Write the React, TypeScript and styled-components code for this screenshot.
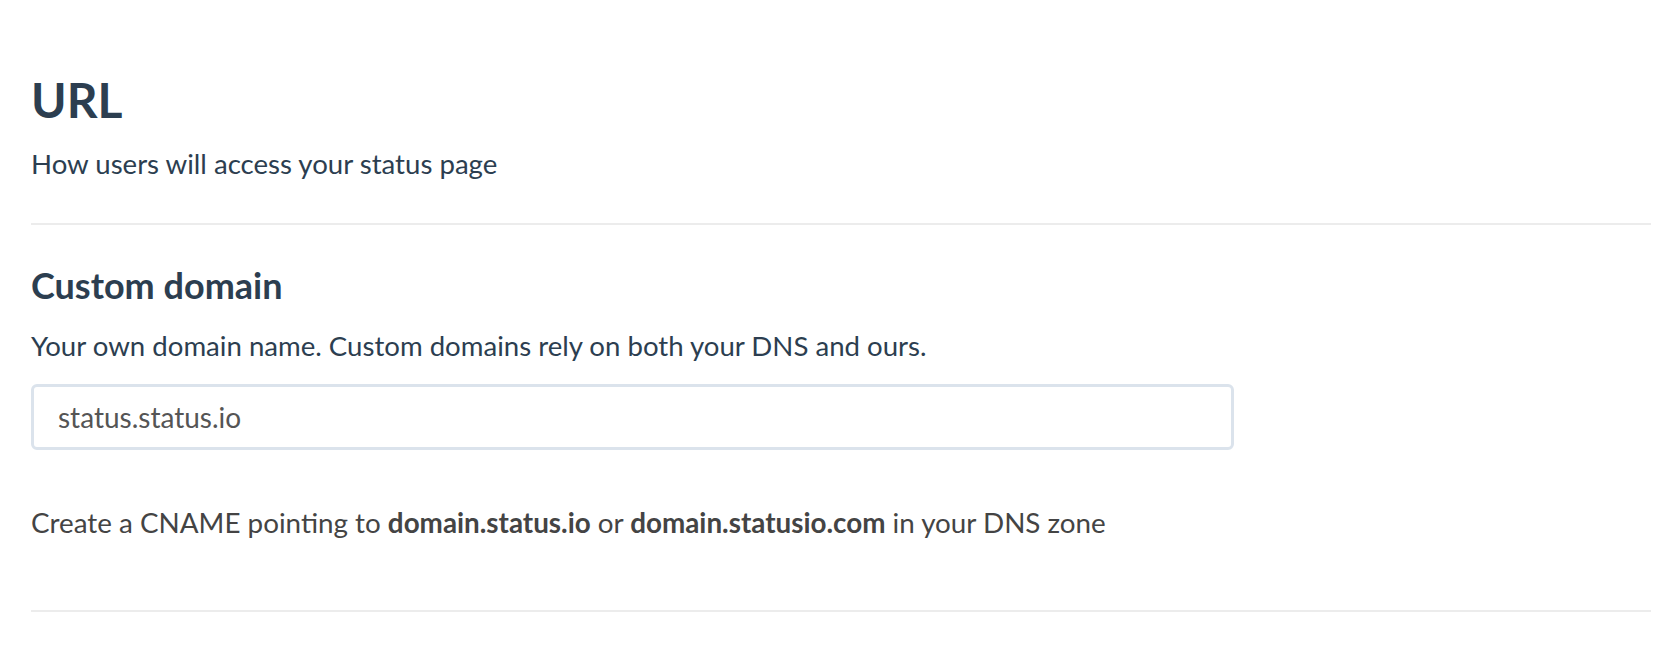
import React from 'react';
import styled, { createGlobalStyle } from 'styled-components';

const COLORS = {
  heading: '#2c3e50',
  text: '#2c3e50',
  muted: '#444444',
  inputText: '#555555',
  divider: '#ececec',
  inputBorder: '#dbe3ec',
};

const GlobalStyle = createGlobalStyle`
  html, body {
    margin: 0;
    padding: 0;
    background: #ffffff;
    font-family: 'Lato', 'Open Sans', sans-serif;
    -webkit-font-smoothing: antialiased;
  }
`;

/** 页面容器 */
const Page = styled.div`
  padding: 71px 20px 0 31px;
`;

const Section = styled.section<{ $padTop?: number; $padBottom: number }>`
  padding-top: ${(p) => p.$padTop ?? 0}px;
  padding-bottom: ${(p) => p.$padBottom}px;
  border-bottom: 2px solid ${COLORS.divider};
`;

const Title = styled.h1`
  margin: 0;
  font-size: 48px;
  font-weight: 700;
  line-height: 58px;
  color: ${COLORS.heading};
`;

const SubTitle = styled.h2`
  margin: 0;
  font-size: 36px;
  font-weight: 700;
  line-height: 44px;
  color: ${COLORS.heading};
`;

const Lead = styled.p<{ $gap: number }>`
  margin: ${(p) => p.$gap}px 0 0;
  font-size: 27.6px;
  line-height: 34px;
  color: ${COLORS.text};
`;

const Field = styled.div`
  padding-top: 21px;
`;

const Input = styled.input`
  display: block;
  box-sizing: border-box;
  width: 1203px;
  height: 66px;
  padding: 0 24px;
  border: 3px solid ${COLORS.inputBorder};
  border-radius: 6px;
  font-family: inherit;
  font-size: 28px;
  color: ${COLORS.inputText};
  outline: none;
  background: #fff;
`;

const Hint = styled.p`
  margin: 56px 0 0;
  font-size: 27.8px;
  line-height: 34px;
  color: ${COLORS.muted};

  strong {
    font-weight: 700;
  }
`;

export default function App() {
  return (
    <>
      <GlobalStyle />
      <Page>
        <Section $padBottom={42}>
          <Title>URL</Title>
          <Lead $gap={18}>How users will access your status page</Lead>
        </Section>
        <Section $padTop={38} $padBottom={70}>
          <SubTitle>Custom domain</SubTitle>
          <Lead $gap={22}>Your own domain name. Custom domains rely on both your DNS and ours.</Lead>
          <Field>
            <Input defaultValue="status.status.io" readOnly />
          </Field>
          <Hint>
            Create a CNAME pointing to <strong>domain.status.io</strong> or{' '}
            <strong>domain.statusio.com</strong> in your DNS zone
          </Hint>
        </Section>
      </Page>
    </>
  );
}
